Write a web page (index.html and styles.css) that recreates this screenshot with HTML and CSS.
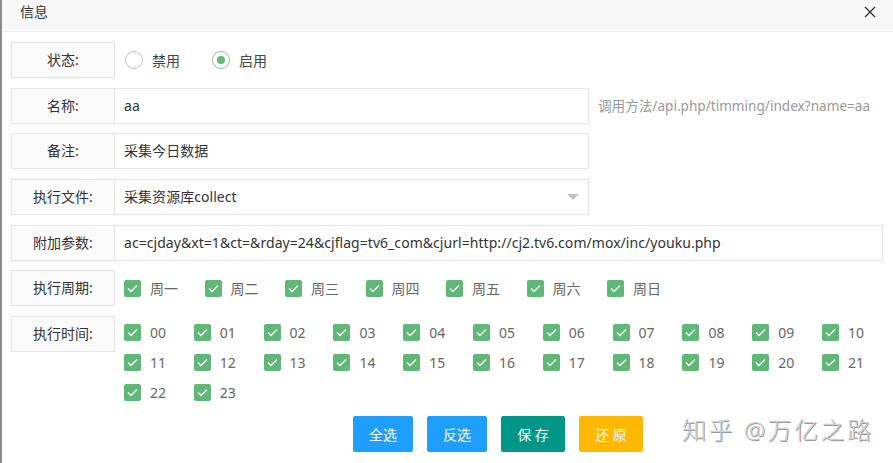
FILE: index.html
```html
<!DOCTYPE html>
<html lang="zh-CN">
  <head>
    <meta charset="UTF-8" />
    <meta name="viewport" content="width=device-width, initial-scale=1.0" />
    <title>信息</title>
    <link rel="stylesheet" href="styles.css">
  </head>
  <body>
    <div class="dialog">
      <div class="head">
        <span class="title">信息</span>
        <svg class="close" width="12" height="12" viewBox="0 0 12 12">
          <path d="M1 1L11 11M11 1L1 11" stroke="#333" stroke-width="1.4" fill="none" />
        </svg>
      </div>

      <div class="form">
        <div class="row">
          <div class="label">状态:</div>
          <div class="block">
            <span class="radio"><i class="circle"></i>禁用</span>
            <span class="radio on"><i class="circle"></i>启用</span>
          </div>
        </div>

        <div class="row">
          <div class="label">名称:</div>
          <div class="input">aa</div>
          <div class="hint">调用方法/api.php/timming/index?name=aa</div>
        </div>

        <div class="row">
          <div class="label">备注:</div>
          <div class="input">采集今日数据</div>
        </div>

        <div class="row">
          <div class="label">执行文件:</div>
          <div class="input select">
            <span>采集资源库collect</span>
            <i class="arrow"></i>
          </div>
        </div>

        <div class="row">
          <div class="label">附加参数:</div>
          <div class="input wide">ac=cjday&amp;xt=1&amp;ct=&amp;rday=24&amp;cjflag=tv6_com&amp;cjurl=http://cj2.tv6.com/mox/inc/youku.php</div>
        </div>

        <div class="row">
          <div class="label">执行周期:</div>
          <div class="block week" id="week"></div>
        </div>

        <div class="row tall">
          <div class="label">执行时间:</div>
          <div class="hours" id="hours"></div>
        </div>

        <div class="buttons">
          <button class="btn blue">全选</button>
          <button class="btn blue">反选</button>
          <button class="btn green">保 存</button>
          <button class="btn warm">还 原</button>
        </div>
      </div>

      <div class="mark">知乎 @万亿之路</div>
    </div>

    <script>
      function checkItem(text) {
        let item = document.createElement("span");
        item.className = "check";
        item.innerHTML =
          '<i class="box"><svg width="11" height="9" viewBox="0 0 11 9"><path d="M1 4.5L4 7.5L10 1.5" stroke="#fff" stroke-width="1.4" fill="none"/></svg></i>' +
          text;
        return item;
      }

      let days = ["周一", "周二", "周三", "周四", "周五", "周六", "周日"];
      let week = document.getElementById("week");
      days.forEach((d) => week.appendChild(checkItem(d)));

      let hours = document.getElementById("hours");
      for (let h = 0; h < 24; h++) {
        hours.appendChild(checkItem(String(h).padStart(2, "0")));
      }
    </script>
  </body>
</html>
```

FILE: styles.css
```css
html,
body {
  margin: 0;
  padding: 0;
  overflow: hidden;
}
body {
  font-family: "Noto Sans", "Noto Sans CJK SC", sans-serif;
  font-size: 14px;
  color: #333;
  background: #fff;
}
.dialog {
  position: relative;
  width: 893px;
  height: 463px;
  box-sizing: border-box;
  border-left: 2px solid #8c8c8c;
}
.head {
  height: 31px;
  border-bottom: 1px solid #eee;
  background: #f8f8f8;
  display: flex;
  justify-content: space-between;
  align-items: flex-start;
  padding: 0 17px 0 18px;
}
.title {
  line-height: 24px;
  color: #333;
}
.close {
  margin-top: 6px;
}
.form {
  padding: 10px 0 0 9px;
}
.row {
  display: flex;
  height: 36px;
  margin-bottom: 9.7px;
}
.row.tall {
  height: auto;
  align-items: flex-start;
}
.label {
  width: 104px;
  height: 36px;
  box-sizing: border-box;
  border: 1px solid #e6e6e6;
  background: #fbfbfb;
  text-align: center;
  line-height: 34px;
  color: #333;
  flex-shrink: 0;
}
.input {
  width: 474px;
  height: 36px;
  box-sizing: border-box;
  border: 1px solid #e6e6e6;
  border-left: 0;
  padding-left: 9px;
  line-height: 34px;
  color: #333;
  white-space: nowrap;
  letter-spacing: 0.05px;
}
.input.wide {
  width: 768px;
}
.select {
  display: flex;
  justify-content: space-between;
  align-items: center;
  padding-right: 9px;
}
.arrow {
  width: 0;
  height: 0;
  border-left: 6px solid transparent;
  border-right: 6px solid transparent;
  border-top: 6px solid #c2c2c2;
}
.hint {
  margin-left: 9px;
  line-height: 36px;
  font-size: 13.6px;
  color: #999;
  white-space: nowrap;
}
.block {
  display: flex;
  align-items: center;
  padding-left: 9px;
}
.radio {
  display: flex;
  align-items: center;
  margin-right: 31px;
  color: #444;
}
.circle {
  width: 18px;
  height: 18px;
  box-sizing: border-box;
  border: 1px solid #c2c2c2;
  border-radius: 50%;
  margin: 0 9px 0 1px;
  display: flex;
  align-items: center;
  justify-content: center;
}
.radio.on .circle {
  border-color: #8fbf9d;
}
.radio.on .circle::after {
  content: "";
  width: 8px;
  height: 8px;
  border-radius: 50%;
  background: #5fb878;
}
.check {
  display: flex;
  align-items: center;
  color: #666;
}
.box {
  width: 17px;
  height: 17px;
  border-radius: 2px;
  background: #5fb878;
  margin-right: 9px;
  display: flex;
  align-items: center;
  justify-content: center;
  flex-shrink: 0;
}
.week .check {
  width: 80.5px;
}
.hours {
  display: grid;
  grid-template-columns: repeat(11, 69.8px);
  grid-auto-rows: 30px;
  padding: 1px 0 0 9px;
  flex-shrink: 0;
}
.buttons {
  display: flex;
  gap: 14px;
  padding-left: 342px;
  margin-top: -1px;
}
.btn {
  height: 36px;
  padding: 0 16px;
  border: none;
  border-radius: 2px;
  color: #fff;
  font-family: inherit;
  font-size: 14px;
  cursor: pointer;
}
.btn.blue {
  background: #1e9fff;
  width: 60px;
}
.btn.green {
  background: #009688;
  width: 64px;
}
.btn.warm {
  background: #ffb800;
  width: 64px;
}
.mark {
  position: absolute;
  left: 680px;
  top: 411px;
  font-size: 24px;
  font-weight: 300;
  letter-spacing: 2.5px;
  color: #d0d0d0;
  text-shadow: 1px 1px 0 #999;
}
```
